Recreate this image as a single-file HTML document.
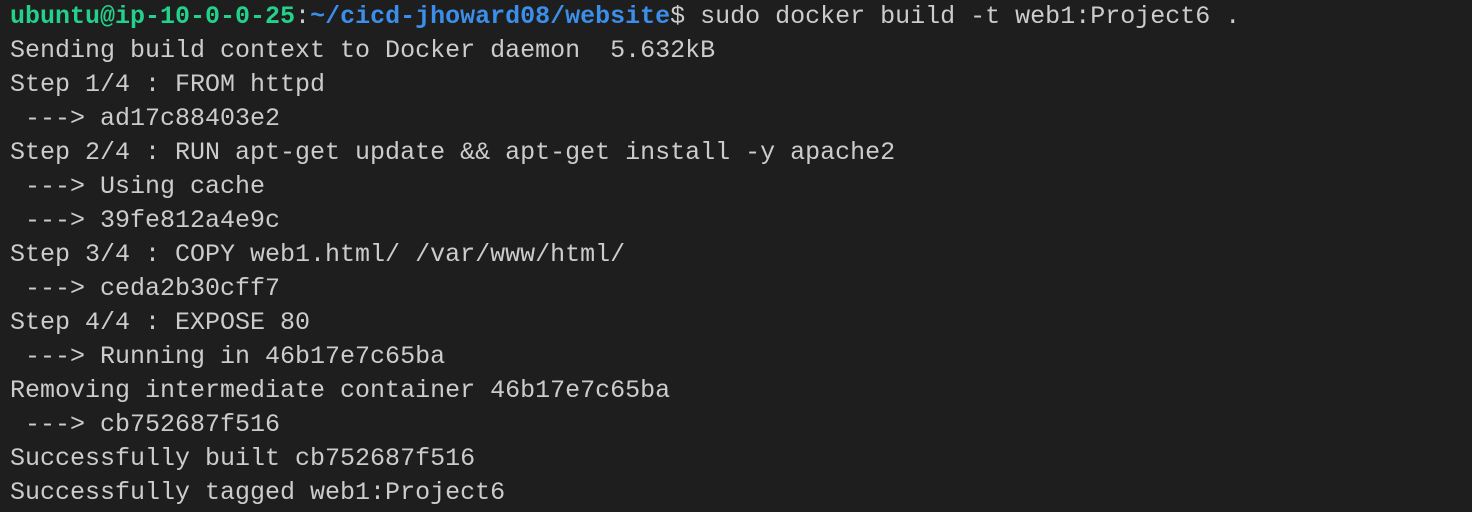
<!DOCTYPE html>
<html><head><style>
html,body{margin:0;padding:0;background:#1e1e1e;width:1472px;height:512px;overflow:hidden}
pre{position:absolute;left:10px;top:0px;margin:0;font-family:"Liberation Mono",monospace;font-size:25px;line-height:34px;color:#cccccc;letter-spacing:0}
.g{color:#23d18b;font-weight:bold}.b{color:#3b8eea;font-weight:bold}
</style></head><body><pre><span class="g">ubuntu@ip-10-0-0-25</span>:<span class="b">~/cicd-jhoward08/website</span>$ sudo docker build -t web1:Project6 .
Sending build context to Docker daemon  5.632kB
Step 1/4 : FROM httpd
 ---&gt; ad17c88403e2
Step 2/4 : RUN apt-get update &amp;&amp; apt-get install -y apache2
 ---&gt; Using cache
 ---&gt; 39fe812a4e9c
Step 3/4 : COPY web1.html/ /var/www/html/
 ---&gt; ceda2b30cff7
Step 4/4 : EXPOSE 80
 ---&gt; Running in 46b17e7c65ba
Removing intermediate container 46b17e7c65ba
 ---&gt; cb752687f516
Successfully built cb752687f516
Successfully tagged web1:Project6</pre></body></html>
